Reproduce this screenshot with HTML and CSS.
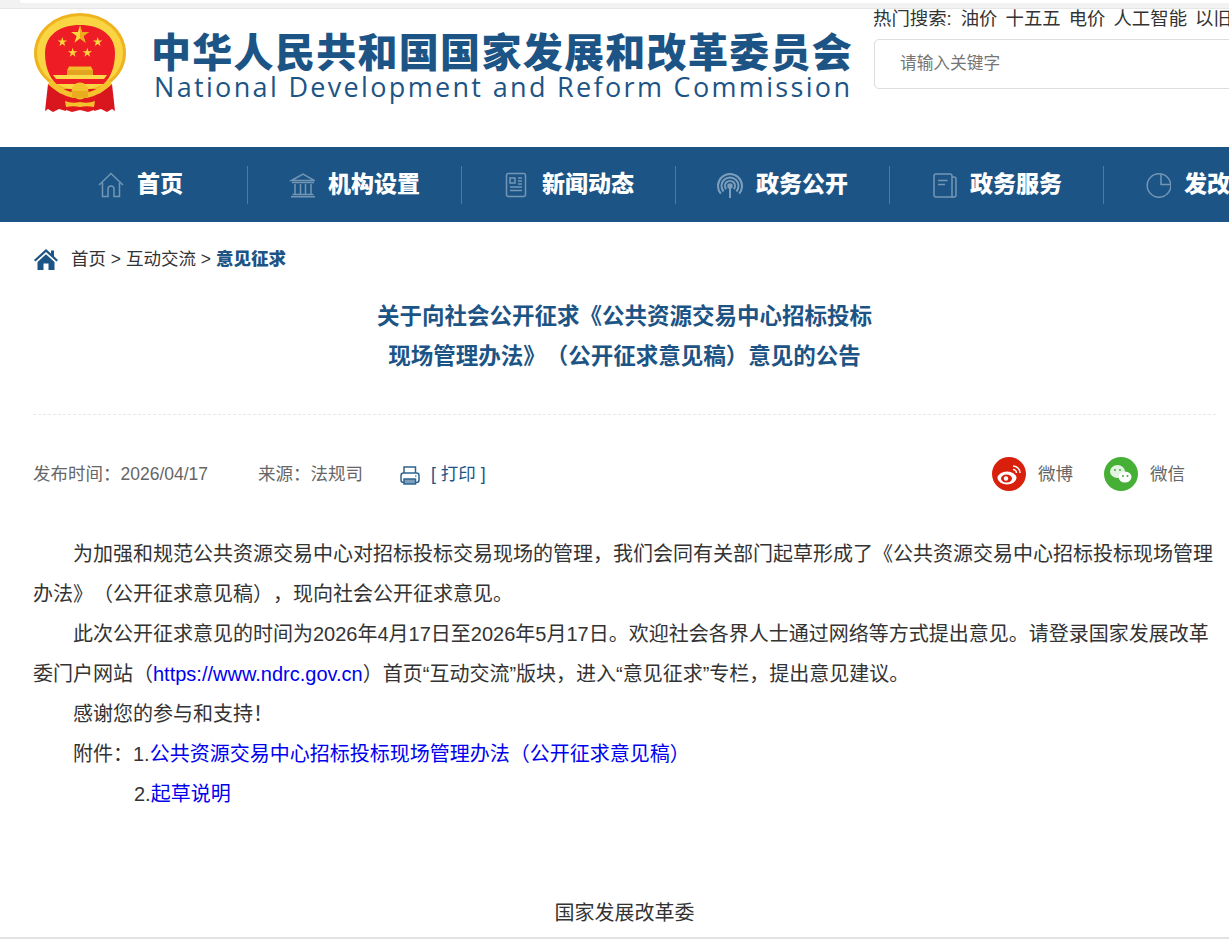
FILE: index.html
```html
<!DOCTYPE html>
<html lang="zh-CN">
<head>
<meta charset="utf-8">
<title>关于向社会公开征求意见的公告</title>
<link rel="stylesheet" href="styles.css">
</head>
<body>
<div class="topbar"><div class="topbar-tab"></div></div>
<header class="header">
  <svg class="emblem" viewBox="0 0 92 100" width="92" height="100" aria-hidden="true">
    <defs>
      <polygon id="star" points="0,-5 1.100,-1.500 4.800,-1.500 1.800,.6 2.900,4 0,1.900 -2.900,4 -1.800,.6 -4.800,-1.500 -1.100,-1.500"/>
    </defs>
    <ellipse cx="46" cy="40" rx="46" ry="40" fill="#eeb31f"/>
    <ellipse cx="46" cy="40" rx="43" ry="37" fill="#f9d544"/>
    <path d="M11 40C11 22 26 12 46 12s35 10 35 28c0 13-4 24-11 31H22C15 64 11 53 11 40z" fill="#ee1c25"/>
    <use href="#star" x="28.300" y="29" fill="#fad73c"/>
    <use href="#star" x="63.700" y="29" fill="#fad73c"/>
    <use href="#star" x="38.700" y="39.700" fill="#fad73c"/>
    <use href="#star" x="53.300" y="39.700" fill="#fad73c"/>
    <polygon fill="#fad73c" points="46,12.500 48.100,19.100 55,19.100 49.400,23.100 51.600,29.700 46,25.600 40.400,29.700 42.600,23.100 37,19.100 43.900,19.100"/>
    <path d="M46 12.500V25.600L51.600 29.700 49.400 23.100 55 19.100H48.100z" fill="#eda91a"/>
    <path d="M35 53.500h22l2 4H33z" fill="#f2bd28"/>
    <rect x="33" y="57" width="26" height="5" fill="#e3a51f"/>
    <path d="M19 62H73L70 66H22z" fill="#fbdb4c"/>
    <path d="M26 76H66L63 96 54 99 46 97 38 99 29 96z" fill="#e0181f"/>
    <path d="M14 71L30 83 32 98 25 96 19 99 14 96 11 98z" fill="#d9151d"/>
    <path d="M78 71L62 83 60 98 67 96 73 99 78 96 81 98z" fill="#d9151d"/>
    <path d="M18 66c5 7 13 12 23 14l-2 5C30 83 21 78 14 71z" fill="#f4c22c"/>
    <path d="M74 66c-5 7-13 12-23 14l2 5c9-2 18-7 25-14z" fill="#f4c22c"/>
    <circle cx="46" cy="78" r="8.500" fill="#f4c22c"/>
    <path d="M38 78h16v7H38z" fill="#e9ac1e"/>
    <path d="M31 88c5 2 10 2 15 1 5 1 10 1 15-1l-1 6c-5-1-9-1-14 0-5-1-9-1-14 0z" fill="#f4c22c"/>
  </svg>
  <div class="brand">
    <div class="brand-cn">中华人民共和国国家发展和改革委员会</div>
    <div class="brand-en">National Development and Reform Commission</div>
  </div>
  <div class="search">
    <div class="hot">
      <span class="hot-label">热门搜索:</span><span>油价</span><span>十五五</span><span>电价</span><span>人工智能</span><span>以旧换新</span>
    </div>
    <div class="search-box">请输入关键字</div>
  </div>
</header>
<nav class="nav">
  <a class="nav-item">
    <svg class="nav-icon" viewBox="-1 0 26 26" width="26" height="26"><path d="M0 13L12 1.500 24 13"/><path d="M3.500 10.500V24.500H9V17a3 3 0 0 1 6 0V24.500H20.500V10.500"/></svg>
    <span class="nav-label">首页</span>
  </a>
  <a class="nav-item">
    <svg class="nav-icon" viewBox="-1 0 26 26" width="26" height="26"><path d="M1.500 8.500L13 2l11.500 6.500z"/><path d="M2 10.500H24M5 12V22M10.500 12V22M15.500 12V22M21 12V22M2.500 22.500H23.500M1 24.800H25"/></svg>
    <span class="nav-label">机构设置</span>
  </a>
  <a class="nav-item">
    <svg class="nav-icon" viewBox="-2 0 26 26" width="26" height="26"><rect x="1.500" y="1.500" width="19" height="23" rx="2"/><path d="M5 6h5v5H5zM13 6h4M13 9h4M13 12h4M5 15h12M5 18.500h12"/></svg>
    <span class="nav-label">新闻动态</span>
  </a>
  <a class="nav-item">
    <svg class="nav-icon nav-icon-bold" viewBox="0 -2 26 26" width="26" height="26"><path d="M13 11V24"/><circle cx="13" cy="12" r="1.800"/><path d="M9.200 15.200a5 5 0 1 1 7.600 0"/><path d="M6.500 17.500a8.500 8.500 0 1 1 13 0"/><path d="M3.800 19.700a12 12 0 1 1 18.400 0"/></svg>
    <span class="nav-label">政务公开</span>
  </a>
  <a class="nav-item">
    <svg class="nav-icon" viewBox="-2 0 26 26" width="26" height="26"><path d="M3 2H17a2 2 0 0 1 2 2V25H3a2 2 0 0 1-2-2V4a2 2 0 0 1 2-2z"/><path d="M5 8.500h9.500M5 12.500h7M19 5h2a2 2 0 0 1 2 2V23a2 2 0 0 1-2 2H19"/></svg>
    <span class="nav-label">政务服务</span>
  </a>
  <a class="nav-item">
    <svg class="nav-icon" viewBox="0 0 26 26" width="26" height="26"><circle cx="14" cy="13.500" r="11.800"/><path d="M16 2V12.500H25.500"/></svg>
    <span class="nav-label">发改数据</span>
  </a>
</nav>
<main class="main">
  <div class="crumbs">
    <svg class="crumb-home" viewBox="0 0 24 22" width="24" height="22"><path d="M12 1L0 12l1.500 1.600L12 4l10.500 9.600L24 12l-4-3.700V2.500h-3v3z"/><path d="M3.500 14L12 6.200 20.500 14V22H14.500V15.500H9.500V22H3.500z"/></svg>
    <span class="crumb-text">首页 &gt; 互动交流 &gt; <b class="crumb-current">意见征求</b></span>
  </div>
  <h1 class="title">关于向社会公开征求《公共资源交易中心招标投标<br>现场管理办法》（公开征求意见稿）意见的公告</h1>
  <div class="meta">
    <span class="meta-text">发布时间：2026/04/17</span>
    <span class="meta-text meta-source">来源：法规司</span>
    <svg class="print-icon" viewBox="0 0 20 19" width="20" height="19"><rect class="print-line" x="4" y="1" width="11.500" height="7"/><rect class="print-line" x="1" y="7" width="18" height="9.500" rx="2.500"/><rect class="print-tray" x="4" y="13" width="11.500" height="5"/><circle class="print-dot" cx="15.800" cy="10" r=".8"/></svg>
    <a class="meta-text print-link">[ 打印 ]</a>
    <span class="share share-first">
      <svg class="share-icon" viewBox="0 0 34 34" width="34" height="34"><circle cx="17" cy="17" r="17" fill="#d9200c"/><ellipse cx="15" cy="21" rx="9.500" ry="6.500" fill="#fff"/><ellipse cx="14.500" cy="21.500" rx="5.500" ry="4" fill="#d9200c"/><circle cx="14" cy="21.500" r="2.200" fill="#fff"/><path d="M21 9a7 7 0 0 1 7 7M21 12.500a3.500 3.500 0 0 1 3.500 3.500" fill="none" stroke="#fff" stroke-width="1.500"/></svg>
      <span class="meta-text">微博</span>
    </span>
    <span class="share share-last">
      <svg class="share-icon" viewBox="0 0 34 34" width="34" height="34"><circle cx="17" cy="17" r="17" fill="#45b035"/><ellipse cx="13.500" cy="14.500" rx="7.500" ry="6.500" fill="#fff" opacity=".85"/><ellipse cx="21" cy="20" rx="6.500" ry="5.500" fill="#fff"/><circle cx="11" cy="13" r="1" fill="#45b035"/><circle cx="16" cy="13" r="1" fill="#45b035"/><circle cx="19" cy="19" r="1" fill="#45b035"/><circle cx="23.500" cy="19" r="1" fill="#45b035"/></svg>
      <span class="meta-text">微信</span>
    </span>
  </div>
  <article class="article">
    <p>为加强和规范公共资源交易中心对招标投标交易现场的管理，我们会同有关部门起草形成了《公共资源交易中心招标投标现场管理办法》（公开征求意见稿），现向社会公开征求意见。</p>
    <p>此次公开征求意见的时间为2026年4月17日至2026年5月17日。欢迎社会各界人士通过网络等方式提出意见。请登录国家发展改革委门户网站（<a class="link">https://www.ndrc.gov.cn</a>）首页“互动交流”版块，进入“意见征求”专栏，提出意见建议。</p>
    <p>感谢您的参与和支持！</p>
    <p>附件：1.<a class="link">公共资源交易中心招标投标现场管理办法（公开征求意见稿）</a></p>
    <p class="attach-2">2.<a class="link">起草说明</a></p>
  </article>
  <div class="signature">国家发展改革委</div>
</main>
<div class="bottombar"></div>
</body>
</html>
```
FILE: styles.css
```css
* { box-sizing: border-box; }
html, body { margin: 0; padding: 0; }
body {
  width: 1229px;
  height: 939px;
  overflow: hidden;
  background: #fff;
  color: #333;
  font-family: "Liberation Sans", "Noto Sans CJK SC", sans-serif;
  text-spacing-trim: space-all;
}
.topbar {
  height: 9px;
  background: #f2f2f2;
  border-bottom: 1px solid #e6e6e6;
}
.topbar-tab {
  height: 3px;
  margin-left: 20px;
  background: #fff;
  border-bottom-left-radius: 5px;
}
.header {
  height: 138px;
  display: flex;
  align-items: flex-start;
  padding-left: 34px;
  overflow: hidden;
}
.emblem { flex: none; margin-top: 4px; }
.brand { flex: none; width: 722px; margin-left: 25px; color: #1c5485; }
.brand-cn {
  margin-top: 22px;
  font-size: 40px;
  line-height: 44px;
  font-weight: 900;
  letter-spacing: 1.300px;
  white-space: nowrap;
}
.brand-en {
  margin-top: -3px;
  margin-left: 3px;
  font-family: "Open Sans", sans-serif;
  font-size: 27px;
  line-height: 30px;
  letter-spacing: 2.330px;
  white-space: nowrap;
}
.search { flex: none; width: 356px; margin-top: -2px; }
.hot {
  display: flex;
  gap: 8px;
  font-size: 18.400px;
  line-height: 24px;
  white-space: nowrap;
  overflow: hidden;
}
.hot-label { margin-right: 1px; }
.search-box {
  width: 400px;
  height: 50px;
  margin-top: 8px;
  margin-left: 1px;
  padding-left: 25px;
  border: 1px solid #ddd;
  border-radius: 5px;
  color: #757575;
  font-size: 16.700px;
  line-height: 47px;
}
.nav {
  height: 75px;
  display: flex;
  align-items: center;
  padding-left: 34px;
  background: #1c5485;
  overflow: hidden;
}
.nav-item {
  flex: none;
  width: 214px;
  height: 38px;
  display: flex;
  align-items: center;
  justify-content: center;
  gap: 13px;
  border-right: 1px solid #4f7ba2;
  color: #fff;
  font-size: 23px;
  font-weight: 900;
  white-space: nowrap;
}
.nav-label { padding-bottom: 6px; }
.nav-icon {
  flex: none;
  fill: none;
  stroke: #7396b5;
  stroke-width: 1.500;
}
.nav-icon-bold { stroke-width: 2; stroke: #7e9fbc; }
.main { padding: 0 13px 0 33px; }
.crumbs {
  height: 36px;
  margin-top: 19px;
  display: flex;
  align-items: center;
  gap: 13px;
  font-size: 17.500px;
}
.crumb-home { flex: none; margin-left: 1px; fill: #1c5485; }
.crumb-text { padding-bottom: 4px; }
.crumb-current { color: #1c5485; font-weight: 900; }
.title {
  margin: 20px 0 0;
  padding-bottom: 37px;
  border-bottom: 1px dashed #e8e8e8;
  color: #1c5485;
  font-size: 22.500px;
  line-height: 40px;
  font-weight: 700;
  text-align: center;
}
.meta {
  height: 34px;
  margin-top: 42px;
  display: flex;
  align-items: center;
  color: #666;
  font-size: 17.500px;
  white-space: nowrap;
}
.meta-text { padding-bottom: 4px; }
.meta-source { margin-left: 50px; }
.print-icon { flex: none; margin-left: 37px; margin-top: 3px; }
.print-line { fill: #fff; stroke: #2f6490; stroke-width: 1.500; }
.print-tray { fill: #7d9fba; stroke: #2f6490; stroke-width: 1.500; }
.print-dot { fill: #2f6490; }
.print-link { margin-left: 11px; color: #1c5485; }
.share { display: flex; align-items: center; gap: 12px; }
.share-first { margin-left: auto; }
.share-last { margin-left: 31px; margin-right: 31px; }
.share-icon { flex: none; }
.article {
  margin-top: 43px;
  font-size: 20px;
  line-height: 40px;
}
.article p { margin: 0; text-indent: 40px; }
.article .attach-2 { text-indent: 101px; }
.link { color: #0000ee; }
.signature {
  margin-top: 79px;
  font-size: 20px;
  line-height: 40px;
  text-align: center;
}
.bottombar {
  height: 2px;
  margin-top: 4px;
  background: #e2e2e2;
}
```
